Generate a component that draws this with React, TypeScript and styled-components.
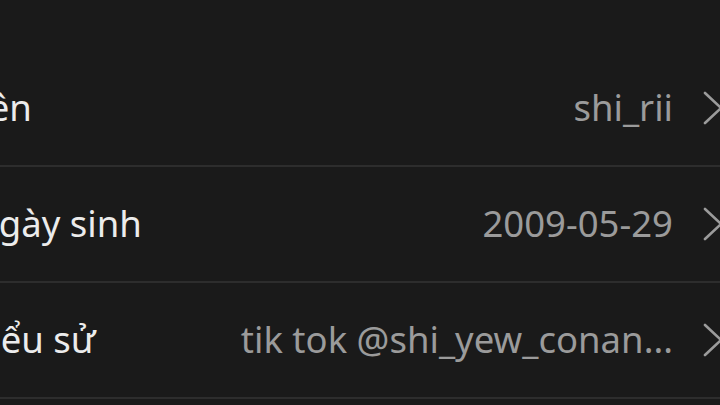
import React from "react";
import styled, { createGlobalStyle } from "styled-components";

const Global = createGlobalStyle`
  html, body { margin: 0; padding: 0; background: #1a1a1a; }
  body { font-family: "Noto Sans", "Open Sans", sans-serif; }
`;

const Screen = styled.div`
  width: 720px;
  height: 405px;
  overflow: hidden;
  background: #1a1a1a;
  padding-top: 51px;
  box-sizing: border-box;
`;

const List = styled.div`
  display: flex;
  flex-direction: column;
  margin-left: -29px;
`;

const Row = styled.div`
  display: flex;
  align-items: center;
  height: 114px;
  border-bottom: 2px solid #2d2d2d;
`;

const Label = styled.span`
  flex: 0 0 auto;
  font-size: 36.5px;
  color: #ececec;
  white-space: nowrap;
  padding-bottom: 2px;
`;

const Value = styled.span`
  flex: 1 1 auto;
  text-align: right;
  font-size: 36.5px;
  color: #9b9b9b;
  white-space: nowrap;
  margin-right: 30px;
  padding-bottom: 2px;
`;

const Chevron = styled.svg`
  flex: 0 0 auto;
  width: 22px;
  height: 34px;
  margin-right: -5px;
`;

const rows = [
  { label: "Tên", value: "shi_rii" },
  { label: "Ngày sinh", value: "2009-05-29" },
  { label: "Tiểu sử", value: "tik tok @shi_yew_conan..." },
];

export default function App() {
  return (
    <>
      <Global />
      <Screen>
        <List>
          {rows.map((r) => (
            <Row key={r.label}>
              <Label>{r.label}</Label>
              <Value>{r.value}</Value>
              <Chevron viewBox="0 0 22 34">
                <path d="M2 2 L18 17 L2 32" fill="none" stroke="#9b9b9b" strokeWidth="2.6" strokeLinecap="round" strokeLinejoin="round" />
              </Chevron>
            </Row>
          ))}
        </List>
      </Screen>
    </>
  );
}
